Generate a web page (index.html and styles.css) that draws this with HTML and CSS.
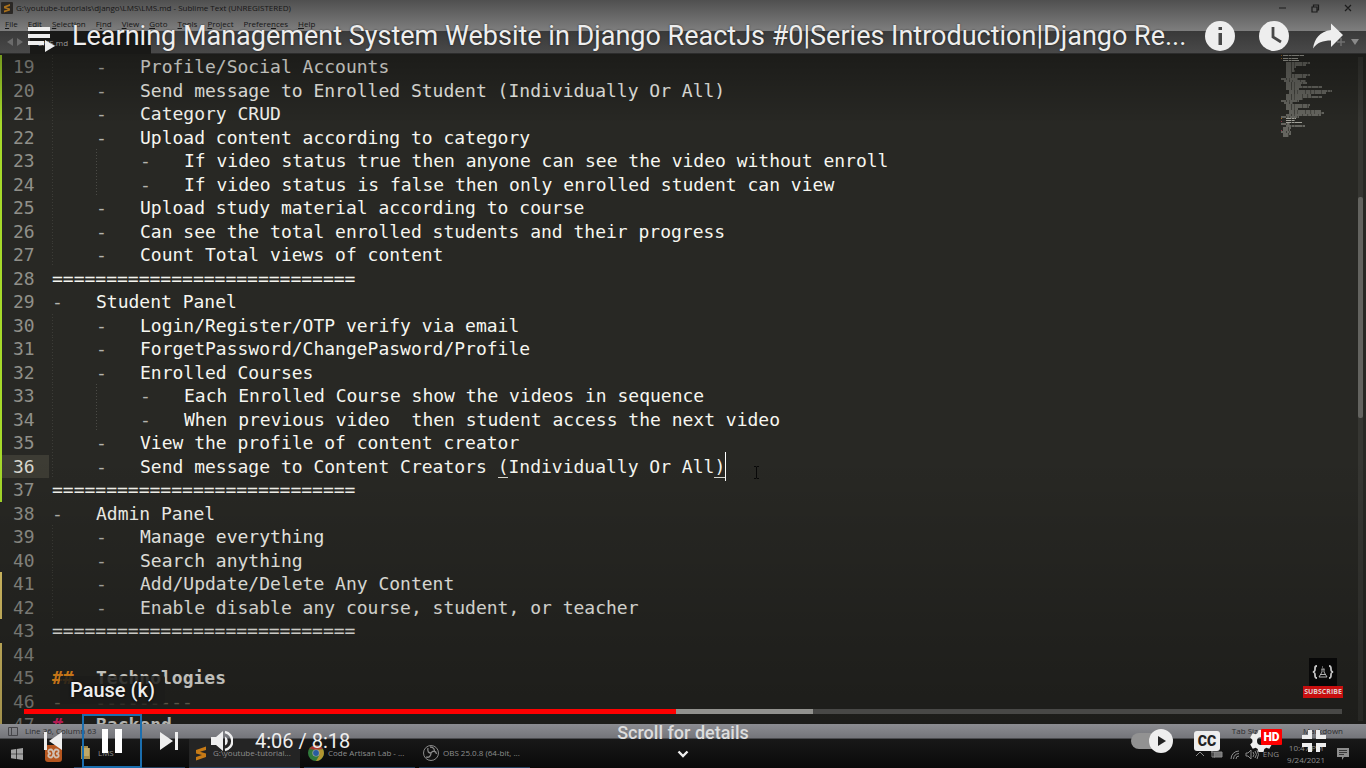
FILE: index.html
```html
<!DOCTYPE html>
<html lang="en">
<head>
<meta charset="utf-8">
<meta name="viewport" content="width=device-width, initial-scale=1">
<title>Learning Management System Website in Django ReactJs</title>
<link rel="stylesheet" href="styles.css">
</head>
<body>
<div class="stage">
  <div class="desktop">
    <header class="window-head">
      <div class="titlebar">
        <svg class="app-icon" viewBox="0 0 12 12"><rect width="12" height="12" rx="1" fill="#2b2825"/><path d="M9 2 3 4.300v2L7 7.500 3 8.500v2l6-2v-2L5 5.200l4-1.200z" fill="#a8701c"/></svg>
        <span class="window-title">G:\youtube-tutorials\django\LMS\LMS.md - Sublime Text (UNREGISTERED)</span>
        <svg class="window-buttons" viewBox="0 0 74 10" fill="none" stroke="#1c1c1c" stroke-width="1.200"><path d="M0 5h7M33 4h5v5h-5zM34.500 4V2h5v5H38M66 2l6 6M72 2l-6 6"/></svg>
      </div>
      <nav class="menubar">
        <a href="#"><u>F</u>ile</a><a href="#"><u>E</u>dit</a><a href="#"><u>S</u>election</a><a href="#">F<u>i</u>nd</a><a href="#"><u>V</u>iew</a><a href="#"><u>G</u>oto</a><a href="#"><u>T</u>ools</a><a href="#"><u>P</u>roject</a><a href="#">Prefere<u>n</u>ces</a><a href="#"><u>H</u>elp</a>
      </nav>
    </header>
    <div class="tabbar">
      <svg class="tab-arrows" viewBox="0 0 30 22" fill="#6b6b6b"><path d="M13 7v8l-6-4zM17 7v8l6-4z"/></svg>
      <div class="tab">LMS.md</div>
      <svg class="tab-menu" viewBox="0 0 24 22"><path d="M5 7v8M1 11h8" stroke="#6f6f6f" stroke-width="1.500"/><path d="M15 8h8l-4 6z" fill="#8a8a8a"/></svg>
    </div>
    <main class="editor">
      <ol class="code">
        <li class="line added d1"><span class="num">19</span><span class="body"><i>-</i>Profile/Social Accounts</span></li>
        <li class="line added d1"><span class="num">20</span><span class="body"><i>-</i>Send message to Enrolled Student (Individually Or All)</span></li>
        <li class="line added d1"><span class="num">21</span><span class="body"><i>-</i>Category CRUD</span></li>
        <li class="line added d1"><span class="num">22</span><span class="body"><i>-</i>Upload content according to category</span></li>
        <li class="line added d2"><span class="num">23</span><span class="body"><i>-</i>If video status true then anyone can see the video without enroll</span></li>
        <li class="line added d2"><span class="num">24</span><span class="body"><i>-</i>If video status is false then only enrolled student can view</span></li>
        <li class="line added d1"><span class="num">25</span><span class="body"><i>-</i>Upload study material according to course</span></li>
        <li class="line added d1"><span class="num">26</span><span class="body"><i>-</i>Can see the total enrolled students and their progress</span></li>
        <li class="line added d1"><span class="num">27</span><span class="body"><i>-</i>Count Total views of content</span></li>
        <li class="line added"><span class="num">28</span><span class="body">============================</span></li>
        <li class="line added"><span class="num">29</span><span class="body"><i>-</i>Student Panel</span></li>
        <li class="line added d1"><span class="num">30</span><span class="body"><i>-</i>Login/Register/OTP verify via email</span></li>
        <li class="line added d1"><span class="num">31</span><span class="body"><i>-</i>ForgetPassword/ChangePasword/Profile</span></li>
        <li class="line added d1"><span class="num">32</span><span class="body"><i>-</i>Enrolled Courses</span></li>
        <li class="line added d2"><span class="num">33</span><span class="body"><i>-</i>Each Enrolled Course show the videos in sequence</span></li>
        <li class="line added d2"><span class="num">34</span><span class="body"><i>-</i>When previous video  then student access the next video</span></li>
        <li class="line added d1"><span class="num">35</span><span class="body"><i>-</i>View the profile of content creator</span></li>
        <li class="line added d1 current"><span class="num">36</span><span class="body"><i>-</i>Send message to Content Creators <b class="bracket">(</b>Individually Or All<b class="bracket">)</b><span class="caret"></span><svg class="ibeam" viewBox="0 0 7 13" fill="none" stroke="#080808"><path d="M1 .5h2l.5.500.5-.500h2M3.500 1v11M1 12.500h2l.5-.500.5.500h2"/></svg></span></li>
        <li class="line added"><span class="num">37</span><span class="body">============================</span></li>
        <li class="line"><span class="num">38</span><span class="body"><i>-</i>Admin Panel</span></li>
        <li class="line d1"><span class="num">39</span><span class="body"><i>-</i>Manage everything</span></li>
        <li class="line d1"><span class="num">40</span><span class="body"><i>-</i>Search anything</span></li>
        <li class="line changed d1"><span class="num">41</span><span class="body"><i>-</i>Add/Update/Delete Any Content</span></li>
        <li class="line changed d1"><span class="num">42</span><span class="body"><i>-</i>Enable disable any course, student, or teacher</span></li>
        <li class="line"><span class="num">43</span><span class="body">============================</span></li>
        <li class="line changed"><span class="num">44</span><span class="body"></span></li>
        <li class="line changed heading"><span class="num">45</span><span class="body"><i class="orange">##</i>Technologies</span></li>
        <li class="line changed rule"><span class="num">46</span><span class="body">-   ---------</span></li>
        <li class="line changed heading"><span class="num">47</span><span class="body"><i class="pink">#</i>Backend</span></li>
      </ol>
      <svg class="minimap" viewBox="0 0 56 84" fill="none" stroke="#a2a29a" stroke-width="1" stroke-dasharray="5 .6 3 .4 7 .5">
        <path stroke="#a06a28" d="M1 1.500h1M1 4.500h1M1 64.500h1"/>
        <path stroke="#8a3a4a" d="M1 67.500h1M1 76.500h1"/>
        <path d="M3 1.500h21M3 4.500h15M3 6.500h16M6 9h24M6 11h20M6 13h10M6 15h8M6 17h9M6 19h6M6 21h24M6 23h20M1 25h17M4 27h22M6 29h21M6 31h15M6 33h36M6 35h13M9 37h43M9 39h37M6 41h25M6 43h36M6 45h17M1 47h18M4 49h9M6 51h24M6 53h23M6 55h12M9 57h32M9 59h35M6 61h35M1 63h18"/>
        <path d="M6 64.500h10M6 66.500h9M6 68.500h16M6 72h19M1 70h9M3 74h8M3 76h7M1 78h10M3 80h8M3 82h6"/>
      </svg>
      <div class="scroll-track"><span class="scroll-before"></span><span class="scroll-thumb"></span><span class="scroll-after"></span></div>
      <div class="watermark">
        <svg viewBox="0 0 28 28"><rect width="28" height="28" fill="#080808"/><g fill="none" stroke="#c4c4c4" stroke-width="1.800"><path d="M8 8c-2 0-2 1-2 3s0 2.500-2 3c2 .5 2 1 2 3s0 3 2 3M20 8c2 0 2 1 2 3s0 2.500 2 3c-2 .5-2 1-2 3s0 3-2 3"/><path stroke-width=".9" d="M12.500 11h3M13 11v3l-3 5h8l-3-5v-3M11.500 16.500h5M13 9h1"/></g></svg>
        <span>SUBSCRIBE</span>
      </div>
    </main>
    <div class="statusbar">
      <svg class="panel-icon" viewBox="0 0 10 9" fill="none" stroke="#46464a"><path d="M.5.500h9v8h-9zM3.500.500v8"/></svg>
      <span class="position">Line 36, Column 63</span>
      <span>Tab Size: 4</span>
      <span>Markdown</span>
    </div>
    <div class="taskbar">
      <svg class="start" viewBox="0 0 12 12" fill="#a3a3a3"><path d="M0 1.700 5 1v4.700H0zM5.700.900 12 0v5.700H5.700zM0 6.300h5V11l-5-.700zM5.700 6.300H12V12l-6.300-.900z"/></svg>
      <svg class="xampp" viewBox="0 0 17 17"><rect width="17" height="17" rx="3" fill="#b5561f"/><path d="M6 4.500c-4 0-3 4 0 4-3 0-4 4 0 4 3 0 2-8 5-8 4 0 3 4 0 4 3 0 4 4 0 4-3 0-2-8-5-8z" fill="none" stroke="#cfc0b4" stroke-width="1.800"/></svg>
      <div class="task"><svg viewBox="0 0 16 16"><path d="M3 1h7v2h2v11H3z" fill="#a58b48"/><path d="M5 3h6v8H5z" fill="#c0a866"/></svg><span>LMS</span></div>
      <div class="task active"><svg viewBox="0 0 16 16"><path d="M13 1.500 3 5v3.500l6 1.500-6 2v3.500l10-3.500V8.500L7 6.700l6-1.700z" fill="#c67a16"/></svg><span>G:\youtube-tutorial...</span></div>
      <div class="task"><svg viewBox="0 0 16 16"><circle cx="8" cy="8" r="8" fill="#317a3c"/><path d="M1.200 4A8 8 0 0 1 15 4.300L8 5z" fill="#a7392e"/><path d="M15 4.300A8 8 0 0 1 8 16l3.500-6L9 4.700z" fill="#b39530"/><circle cx="8" cy="8" r="3.600" fill="#aaa"/><circle cx="8" cy="8" r="2.900" fill="#285da0"/></svg><span>Code Artisan Lab - ...</span></div>
      <div class="task"><svg viewBox="0 0 16 16" fill="none" stroke="#8a8a8a"><circle cx="8" cy="8" r="7.500" fill="#111"/><path d="M5 3c-1 4 1 5 3 5 0 3-2 5-5 4M8 8c2-3 5-2 5.500 1M7 2c4 0 5 3 4 5" stroke-width="1.300"/></svg><span>OBS 25.0.8 (64-bit, ...</span></div>
      <div class="tray">
        <svg class="tray-icons" viewBox="0 0 64 14" fill="none" stroke="#8b8b8b"><path d="m1 9 4-4 4 4"/><path d="M19 5h8v5h-8z" fill="#777"/><path d="M17 3v4M16 5h3M17 7v3h3"/><path d="M36 12a8 8 0 0 1 8-8M38.500 12A6 6 0 0 1 44 6.500M41 12a3 3 0 0 1 3-3"/><path d="M51 6h2l3-3v9l-3-3h-2zM58 5q2 2.500 0 5M60 4q3 3.500 0 7M62 3q3 4.500 0 9"/></svg>
        <span>ENG</span>
        <span class="clock">10:47 PM<br>9/24/2021</span>
        <svg class="note" viewBox="0 0 12 12"><path d="M0 0h12v9H7l-2 3V9H0z" fill="#8e8e8e"/><path d="M2 2.500h8M2 4.500h8M2 6.500h5" stroke="#222" stroke-width=".8"/></svg>
      </div>
    </div>
  </div>

  <div class="player">
    <div class="player-top">
      <button class="icon-btn list" aria-label="Playlist"><svg viewBox="0 0 28 26"><path d="M0 1h22v4H0zM0 8h22v4H0zM0 15h16v4H0zM17 14l10 6-10 6z" fill="#eee"/></svg></button>
      <h1>Learning Management System Website in Django ReactJs #0|Series Introduction|Django Re...</h1>
      <button class="icon-btn round" aria-label="Info"><svg viewBox="0 0 30 30"><circle cx="15" cy="15" r="15" fill="#eee"/><path d="M13.500 6h3.500v3h-3.500zM13.500 12h3.500v12h-3.500z" fill="#484848"/></svg></button>
      <button class="icon-btn round" aria-label="Watch later"><svg viewBox="0 0 30 30"><circle cx="15" cy="15" r="15" fill="#eee"/><path d="M14 6v10l8 5" fill="none" stroke="#484848" stroke-width="2.800"/></svg></button>
      <button class="icon-btn round" aria-label="Share"><svg viewBox="0 0 30 30"><path d="M18 2.500 30 14 18 26v-6.500C10 19.500 4 21.500 0 27.500 1.500 18 6.500 10.500 18 9z" fill="#eee"/></svg></button>
    </div>
    <div class="player-bottom">
      <div class="tooltip">Pause (k)</div>
      <div class="progress" role="progressbar" aria-label="Seek" aria-valuenow="246" aria-valuemax="498"><span class="played" style="width:49.5%"></span><span class="buffered" style="width:10.4%"></span></div>
      <div class="controls">
        <div class="left">
          <button class="ctl prev" aria-label="Previous"><svg viewBox="0 0 18 18"><path d="M0 0h3v18H0zM18 0v18L5 9z" fill="#eee"/></svg></button>
          <button class="ctl pause" aria-label="Pause"><svg viewBox="0 0 20 24"><path d="M0 0h6v24H0zM13 0h7v24h-7z" fill="#fff"/></svg></button>
          <button class="ctl next" aria-label="Next"><svg viewBox="0 0 18 18"><path d="M15 0h3v18h-3zM0 0v18l13-9z" fill="#eee"/></svg></button>
          <button class="ctl volume" aria-label="Mute"><svg viewBox="0 0 22 22"><path d="M0 7h5l7-6v20l-7-6H0z" fill="#eee"/><path d="M14 6.500a5 5 0 0 1 0 9z" fill="#eee"/><path d="M14 2a9.200 9.200 0 0 1 0 18" fill="none" stroke="#eee" stroke-width="2.400"/></svg></button>
          <span class="time">4:06 / 8:18</span>
        </div>
        <div class="details">Scroll for details<svg viewBox="0 0 12 8"><path d="m1.500 1.500 4.500 4.500 4.500-4.500" fill="none" stroke="#eee" stroke-width="2.400"/></svg></div>
        <div class="right">
          <button class="ctl" aria-label="Autoplay"><svg class="autoplay" viewBox="0 0 42 24"><rect y="4" width="36" height="16" rx="8" fill="#929292"/><circle cx="30" cy="12" r="12" fill="#eee"/><path d="M27 7v10l8-5z" fill="#222"/></svg></button>
          <button class="ctl cc" aria-label="Subtitles">CC</button>
          <button class="ctl settings" aria-label="Settings"><svg viewBox="0 0 24 24"><path d="M9.500 1h5l.8 3 2 1.200 3-.9 2.500 4.300-2.200 2.200v2.400l2.200 2.200-2.500 4.300-3-.9-2 1.200-.8 3h-5l-.8-3-2-1.200-3 .9-2.500-4.300 2.200-2.200v-2.400L1.200 8.600l2.500-4.300 3 .9 2-1.200zM12 8a4 4 0 1 0 0 8 4 4 0 0 0 0-8z" fill="#eee" fill-rule="evenodd"/></svg><span class="hd">HD</span></button>
          <button class="ctl" aria-label="Exit full screen"><svg class="exit" viewBox="0 0 24 24"><path d="M6 1h4v9H0V6h6zM14 1h4v5h6v4H14zM0 14h10v9H6v-5H0zM14 14h10v4h-6v5h-4z" fill="#eee"/></svg></button>
        </div>
      </div>
    </div>
  </div>
</div>
</body>
</html>
```

FILE: styles.css
```css
* { box-sizing: border-box; }
body { margin: 0; background: #000; font-family: Roboto, "Liberation Sans", sans-serif; }
button { border: 0; padding: 0; background: none; color: inherit; font: inherit; cursor: pointer; }
svg { display: block; flex: none; }

.stage { position: relative; height: 100vh; min-height: 480px; overflow: hidden; }
.desktop { display: flex; flex-direction: column; height: 100%; font-family: "Open Sans", "Noto Sans", sans-serif; font-size: 8px; line-height: 16px; }

/* Editor window */
.window-head { background: linear-gradient(#505050, #7e7e7e); color: #161616; }
.titlebar { display: flex; align-items: center; height: 16px; padding: 0 13px 0 1px; }
.app-icon { width: 12px; height: 12px; margin-right: 3px; }
.window-title { flex: 1; white-space: nowrap; }
.window-buttons { width: 74px; height: 10px; }
.menubar { display: flex; gap: 10px; height: 15px; padding-left: 5px; line-height: 15px; }
.menubar a { color: inherit; text-decoration: none; }
.tabbar { display: flex; height: 23px; background: linear-gradient(#393939, #494949); border-bottom: 1px solid #2c2c2c; }
.tab-arrows { width: 30px; height: 22px; }
.tab { width: 121px; height: 23px; padding-left: 8px; line-height: 23px; color: #999; background: #191917; }
.tab-menu { width: 24px; height: 22px; margin-left: auto; margin-right: 6px; }

.editor { position: relative; display: flex; flex: 1; min-height: 0; overflow: hidden; background: #282824; }
.editor::after { content: ""; position: absolute; inset: 0; background: linear-gradient(rgba(0,0,0,.3), transparent 70px, transparent 60%, rgba(0,0,0,.28)); pointer-events: none; }
.code { flex: 1; display: grid; grid-auto-rows: 1fr; margin: 1px 0 -13px; padding: 0; list-style: none; color: #f6f6f0; font-family: "DejaVu Sans Mono", "Liberation Mono", monospace; font-size: 18px; line-height: 23px; white-space: pre; }
.line { display: flex; min-height: 0; border-left: 2px solid transparent; }
.added { border-color: #a6da2a; }
.changed { border-color: #e0c868; }
.num { width: 47px; padding-left: 11px; color: #90908a; }
.current .num { color: #d8d8d0; background: #3d3c34; }
.body { position: relative; display: flex; margin-left: 3px; }
.body i { width: 44px; color: #b4b4ae; font-style: normal; }
.d1 .body { padding-left: 44px; }
.d2 .body { padding-left: 88px; }
.d1 .body { background: repeating-linear-gradient(#3c3c37 0 1px, transparent 1px 3px) 0 0 / 1px 100% no-repeat; }
.d2 .body { background: repeating-linear-gradient(#3c3c37 0 1px, transparent 1px 3px) 0 0 / 1px 100% no-repeat, repeating-linear-gradient(#4a4a45 0 1px, transparent 1px 3px) 44px 0 / 1px 100% no-repeat; }
.bracket { height: 23px; font-weight: 400; border-bottom: 1px solid #d8d8d0; }
.caret { width: 1px; height: 29px; margin-top: -3px; background: #fff; }
.ibeam { width: 7px; height: 13px; margin: 11px 0 0 27px; }
.heading .body { font-weight: 700; }
.body .orange { color: #fd971f; }
.body .pink { color: #f92672; }
.rule .body { color: #75715e; }

.minimap { width: 56px; height: 84px; margin-right: 22px; }
.scroll-track { display: flex; flex-direction: column; width: 5px; margin: 3px 3px 3px 0; background: #363632; }
.scroll-before { flex: 140; }
.scroll-thumb { flex: 221; border-radius: 2px; background: #63635f; }
.scroll-after { flex: 303; }
.watermark { position: absolute; z-index: 1; right: 23px; bottom: 26px; display: flex; flex-direction: column; align-items: center; color: #e0cccc; font-weight: 700; font-size: 7px; line-height: 12px; }
.watermark svg { width: 28px; height: 28px; }
.watermark span { width: 40px; text-align: center; background: #c80f0f; }

.statusbar { display: flex; align-items: center; gap: 32px; height: 15px; padding: 0 23px 0 8px; background: linear-gradient(#8c8d92, #74757a); border-bottom: 1px solid #4a4b4e; color: #2d2d30; }
.panel-icon { width: 10px; height: 9px; margin-right: -25px; }
.position { margin-right: auto; }

.taskbar { display: flex; align-items: center; height: 29px; padding-left: 11px; background: linear-gradient(#181818, #0a0a0a); color: #8e8e8e; }
.start { width: 12px; height: 12px; }
.xampp { width: 17px; height: 17px; margin: 0 12px 0 22px; }
.task { display: flex; align-items: center; gap: 4px; width: 111px; height: 29px; margin-right: 4px; padding-left: 4px; border-bottom: 1px solid #25425e; white-space: nowrap; }
.task.active { background: #242424; }
.task svg { width: 16px; height: 16px; }
.tray { display: flex; align-items: center; gap: 4px; margin-left: auto; padding-right: 17px; }
.tray-icons { width: 64px; height: 14px; }
.clock { margin-left: 4px; line-height: 12px; text-align: center; }
.note { width: 12px; height: 12px; margin-left: 8px; }

/* Player controls over the video */
.player { position: absolute; inset: 0; z-index: 2; display: flex; flex-direction: column; justify-content: space-between; color: #eee; }
.player-top { display: flex; align-items: center; gap: 24px; height: 72px; padding: 0 23px 0 28px; }
.player-top h1 { flex: 1; min-width: 0; margin: 0 -12px 0 0; padding-right: 12px; overflow: hidden; font-size: 27px; font-weight: 400; line-height: 36px; white-space: nowrap; text-shadow: 0 0 2px rgba(0,0,0,.6); }
.list svg { width: 28px; height: 26px; }
.list { margin: 6px -8px 0 0; }
.round svg { width: 30px; height: 30px; }
.tooltip { width: max-content; margin: 0 0 5px 60px; padding: 0 10px; background: rgba(28,28,26,.85); border-radius: 2px; font-size: 20px; font-weight: 500; line-height: 28px; text-shadow: 0 0 3px #000; }
.progress { display: flex; height: 5px; margin: 0 24px; background: #484846; }
.played { background: #f00; }
.buffered { background: #92928e; }
.controls { display: grid; grid-template-columns: 1fr auto 1fr; height: 54px; padding: 0 24px; }
.left, .right { display: flex; align-items: center; }
.right { justify-content: flex-end; gap: 21px; padding-right: 16px; }
.ctl { display: flex; align-items: center; justify-content: center; height: 54px; }
.prev { width: 58px; }
.next { width: 54px; }
.prev svg, .next svg { width: 18px; height: 18px; }
.pause { width: 60px; border: 2px solid #1b6eae; }
.pause svg { width: 20px; height: 24px; }
.volume { width: 52px; }
.volume svg { width: 22px; height: 22px; }
.time { margin-left: 7px; font-size: 20px; }
.details { display: flex; flex-direction: column; align-items: center; gap: 6px; padding-top: 8px; color: #ddd; font-size: 18px; font-weight: 500; line-height: 22px; }
.details svg { width: 12px; height: 8px; }
.autoplay { width: 42px; height: 24px; }
.right .cc { width: 26px; height: 20px; border-radius: 3px; background: #eee; color: #222; font-weight: 900; font-size: 14px; }
.settings { position: relative; margin: 0 8px; }
.settings svg { width: 24px; height: 24px; }
.hd { position: absolute; left: 12px; top: 15px; width: 21px; background: #f00; color: #fff; border-radius: 1px; font-size: 12px; font-weight: 900; line-height: 16px; text-align: center; }
.exit { width: 24px; height: 24px; }
```
